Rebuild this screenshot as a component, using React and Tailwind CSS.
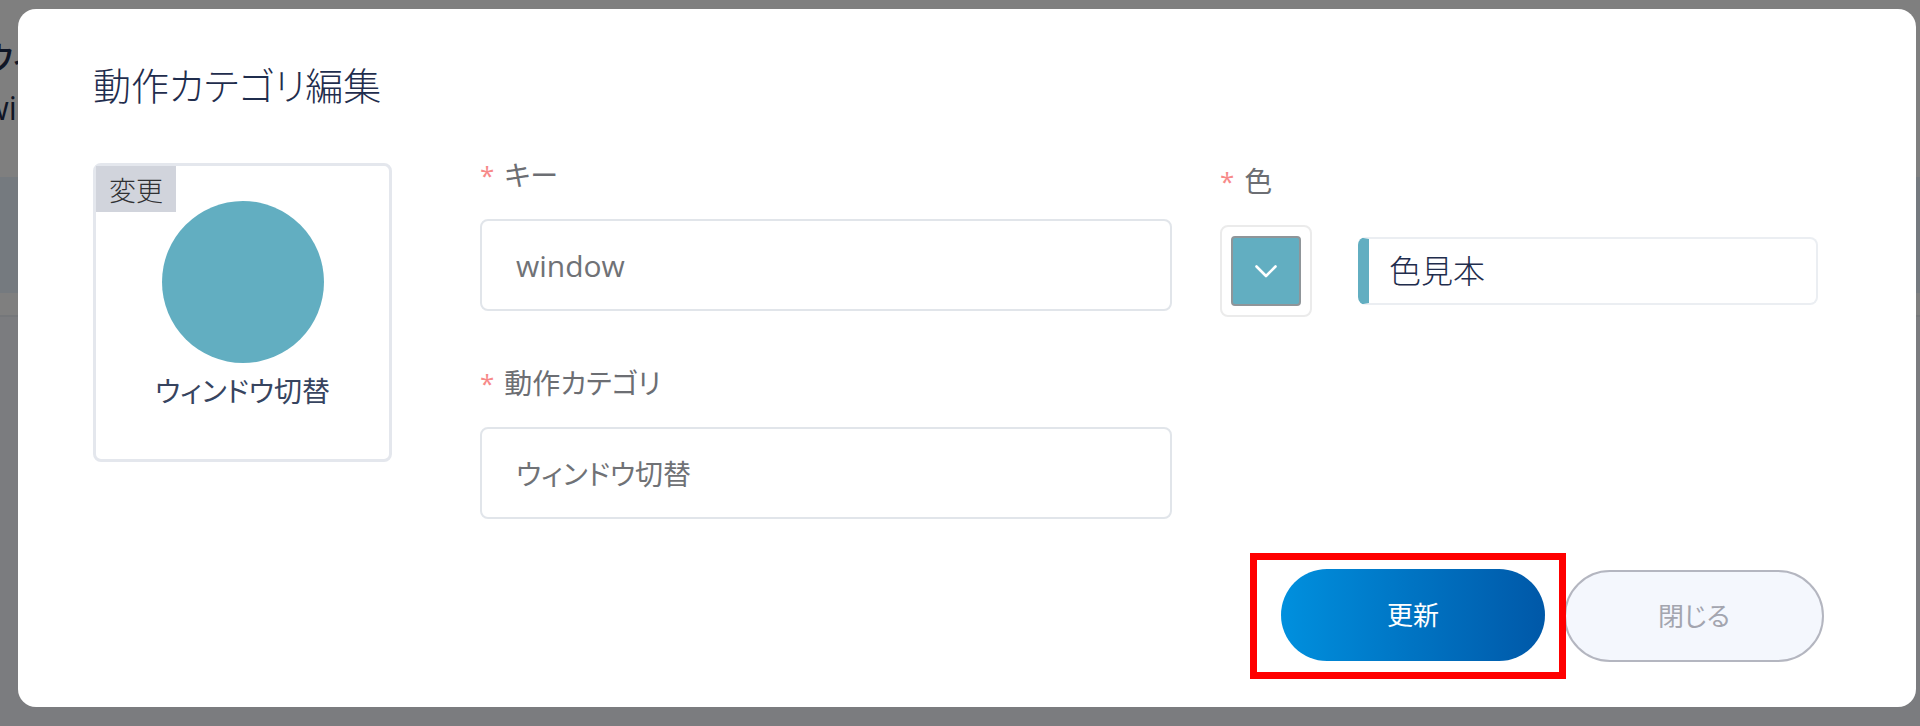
import React, { useState } from 'react';

// Label with the red required mark in front
const FieldLabel = ({ htmlFor, children }) => (
  <label htmlFor={htmlFor} className="flex h-10 items-center text-[28px] font-normal leading-10 text-[#6c6e73]">
    <span className="mr-2.5 text-[26px] text-[#f78989] font-['Open_Sans']">*</span>
    {children}
  </label>
);

const App = () => {
  const [key, setKey] = useState('window');
  const [category, setCategory] = useState('ウィンドウ切替');

  return (
    <div className="relative min-h-screen overflow-hidden bg-white font-['Open_Sans','Noto_Sans_CJK_JP',sans-serif] font-light [font-feature-settings:'palt'] text-[#1f2d4d]">
      {/* Page behind the dialog */}
      <div className="absolute inset-0 flex flex-col" aria-hidden="true">
        <div className="-ml-4 h-[177px] whitespace-nowrap pt-9">
          <p className="text-[32px] font-medium leading-[44px]">ウィ</p>
          <p className="text-[32px] font-normal leading-[56px]">wi</p>
        </div>
        <div className="h-[116px] bg-[#ebf5ff]" />
        <div className="h-6 border-b-2 border-[#ebeef5]" />
        <div className="grow bg-[#f6f8ff]" />
      </div>
      <div className="absolute inset-0 bg-black/50" />

      {/* Dialog */}
      <div
        role="dialog"
        aria-labelledby="dialog-title"
        className="relative mb-5 ml-[18px] mr-1 mt-[9px] rounded-[18px] bg-white pb-7 pl-[75px] pr-[92px] pt-[50px]"
      >
        <h1 id="dialog-title" className="text-[38px] leading-[52px]">動作カテゴリ編集</h1>

        <div className="mt-11 grid grid-cols-[299px_780fr_652fr] items-start">
          {/* Icon card */}
          <div className="relative mt-2 flex h-[299px] flex-col items-center rounded-lg border-[3px] border-[#e4e7ed] pt-[35px]">
            <button type="button" className="absolute left-0 top-0 h-[46px] w-20 bg-[#d1d4dc] pt-1 text-[27px] leading-[42px] text-[#303133]">
              変更
            </button>
            <div className="size-[162px] rounded-full bg-[#62aec1]" />
            <p className="mt-2 text-[28px] font-normal leading-10 text-[#37445f]">ウィンドウ切替</p>
          </div>

          {/* Text fields */}
          <div className="ml-[88px] flex flex-col">
            <FieldLabel htmlFor="key">キー</FieldLabel>
            <input
              id="key"
              type="text"
              value={key}
              onChange={(e) => setKey(e.target.value)}
              className="mt-6 h-[92px] w-full rounded-lg border-2 border-[#e1e5ea] px-[34px] text-[30px] font-normal text-[#707276] outline-none"
            />
            <div className="mt-[52px]">
              <FieldLabel htmlFor="category">動作カテゴリ</FieldLabel>
            </div>
            <input
              id="category"
              type="text"
              value={category}
              onChange={(e) => setCategory(e.target.value)}
              className="mt-6 h-[92px] w-full rounded-lg border-2 border-[#e1e5ea] px-[34px] text-[28px] font-normal text-[#707276] outline-none"
            />
          </div>

          {/* Colour */}
          <div className="ml-12 mr-1.5 mt-1.5">
            <FieldLabel htmlFor="color">色</FieldLabel>
            <div className="mt-6 flex items-center">
              <button id="color" type="button" aria-label="色" className="size-[92px] shrink-0 rounded-lg border-2 border-[#ebebeb] p-[9px]">
                <span className="flex size-full items-center justify-center rounded-sm border-2 border-[#8f9599] bg-[#62aec1]">
                  <svg width="24" height="24" viewBox="0 0 24 24" fill="none" stroke="white" strokeWidth="2.6" strokeLinecap="round" strokeLinejoin="round">
                    <path d="M2.5 7.5 12 17l9.500-9.500" />
                  </svg>
                </span>
              </button>
              <div className="ml-[46px] h-[68px] grow rounded-lg border-2 border-l-[11px] border-[#ebeef2] border-l-[#62aec1] pl-5 text-[32px] leading-[64px]">
                色見本
              </div>
            </div>
          </div>
        </div>

        {/* Buttons */}
        <div className="mt-[34px] flex items-center justify-end">
          <div className="relative z-10 border-[7px] border-[#ff0000] pb-[11px] pl-6 pr-3.5 pt-[9px]">
            <button type="button" className="block h-[92px] w-[264px] rounded-full bg-linear-to-r from-[#0090de] to-[#0058a8] text-[26px] font-normal text-white">
              更新
            </button>
          </div>
          <button type="button" className="-ml-0.5 h-[92px] w-[260px] rounded-full border-2 border-[#b4b6c0] bg-[#f4f7fd] text-[26px] font-normal text-[#a3a5af]">
            閉じる
          </button>
        </div>
      </div>
    </div>
  );
};

export default App;
